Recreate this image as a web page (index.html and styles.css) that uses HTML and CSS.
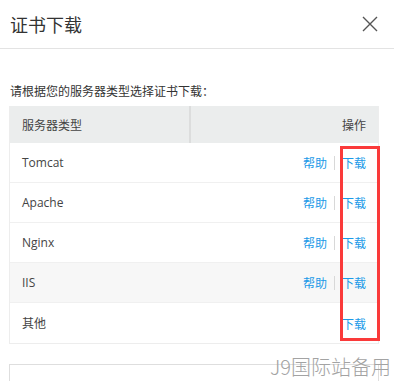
FILE: index.html
```html
<!DOCTYPE html>
<html lang="zh-CN">
<head>
<meta charset="utf-8">
<link rel="stylesheet" href="styles.css">
</head>
<body>
<div class="dialog">
  <div class="dlg-head">
    <div class="dlg-title">证书下载</div>
    <svg class="close" width="16" height="16" viewBox="0 0 16 16"><path d="M1 1L15 15M15 1L1 15" stroke="#555" stroke-width="1.4" fill="none"/></svg>
  </div>
  <div class="dlg-body">
    <div class="intro">请根据您的服务器类型选择证书下载：</div>
    <div class="table">
      <div class="row head">
        <div class="c1">服务器类型</div>
        <div class="c2">操作</div>
      </div>
      <div class="row"><div class="c1">Tomcat</div><div class="c2"><a>帮助</a><span class="sep"></span><a>下载</a></div></div>
      <div class="row"><div class="c1">Apache</div><div class="c2"><a>帮助</a><span class="sep"></span><a>下载</a></div></div>
      <div class="row"><div class="c1">Nginx</div><div class="c2"><a>帮助</a><span class="sep"></span><a>下载</a></div></div>
      <div class="row hover"><div class="c1">IIS</div><div class="c2"><a>帮助</a><span class="sep"></span><a>下载</a></div></div>
      <div class="row last"><div class="c1">其他</div><div class="c2"><a>下载</a></div></div>
      <div class="mark"></div>
    </div>
    <div class="box"></div>
  </div>
  <div class="watermark">J9国际站备用</div>
</div>
</body>
</html>
```
FILE: styles.css
```css
html, body {
  margin: 0;
  padding: 0;
  background: #fff;
}
body {
  font-family: "Open Sans", "Noto Sans CJK SC", sans-serif;
  color: #333;
  width: 394px;
  height: 381px;
  overflow: hidden;
}
.dialog {
  position: relative;
  height: 381px;
  overflow: hidden;
}
.dlg-head {
  height: 48px;
  border-bottom: 1px solid #e3e3e3;
  display: flex;
  align-items: center;
  justify-content: space-between;
  padding: 0 16px 0 10px;
}
.dlg-title {
  font-family: "Noto Sans CJK SC", sans-serif;
  font-size: 18px;
  color: #333;
  line-height: 24px;
  margin-top: -1px;
}
.close {
  display: block;
  margin-top: -1px;
}
.dlg-body {
  padding: 0 0 0 9px;
}
.intro {
  margin-top: 33px;
  font-family: "Noto Sans CJK SC", sans-serif;
  font-size: 12px;
  line-height: 18px;
  color: #333;
  padding-left: 1px;
}
.table {
  position: relative;
  margin-top: 6px;
  width: 368px;
  border: 1px solid #ededed;
  border-top: none;
}
.row {
  display: flex;
  height: 40px;
  align-items: center;
  border-bottom: 1px solid #f0f0f0;
  font-size: 12px;
  box-sizing: border-box;
}
.row.last {
  border-bottom: none;
  height: 40px;
}
.row.head {
  height: 37px;
  background: #ebeded;
  border-bottom: none;
  font-family: "Noto Sans CJK SC", sans-serif;
  color: #444;
}
.row.hover {
  background: #f7f7f7;
}
.c1 {
  width: 181px;
  box-sizing: border-box;
  padding-left: 12px;
  height: 100%;
  display: flex;
  align-items: center;
  color: #444;
}
.row.head .c1 {
  border-right: 2px solid #dcdddd;
}
.c2 {
  flex: 1;
  display: flex;
  justify-content: flex-end;
  align-items: center;
  padding-right: 12px;
  height: 100%;
}
.c2 a {
  font-family: "Noto Sans CJK SC", sans-serif;
  color: #1a9ae8;
  font-size: 12px;
}
.sep {
  display: inline-block;
  width: 1px;
  height: 14px;
  background: #d8d8d8;
  margin: 0 7px;
}
.mark {
  position: absolute;
  left: 330px;
  top: 40px;
  width: 34px;
  height: 189px;
  border: 3px solid #fa3a3a;
}
.box {
  margin-top: 20px;
  width: 368px;
  height: 40px;
  border: 1px solid #dedede;
}
.watermark {
  position: absolute;
  left: 268px;
  top: 355px;
  font-family: "Noto Sans CJK SC", sans-serif;
  font-weight: 300;
  font-size: 20px;
  line-height: 24px;
  color: #a3a3a3;
  padding-left: 2px;
}
```
